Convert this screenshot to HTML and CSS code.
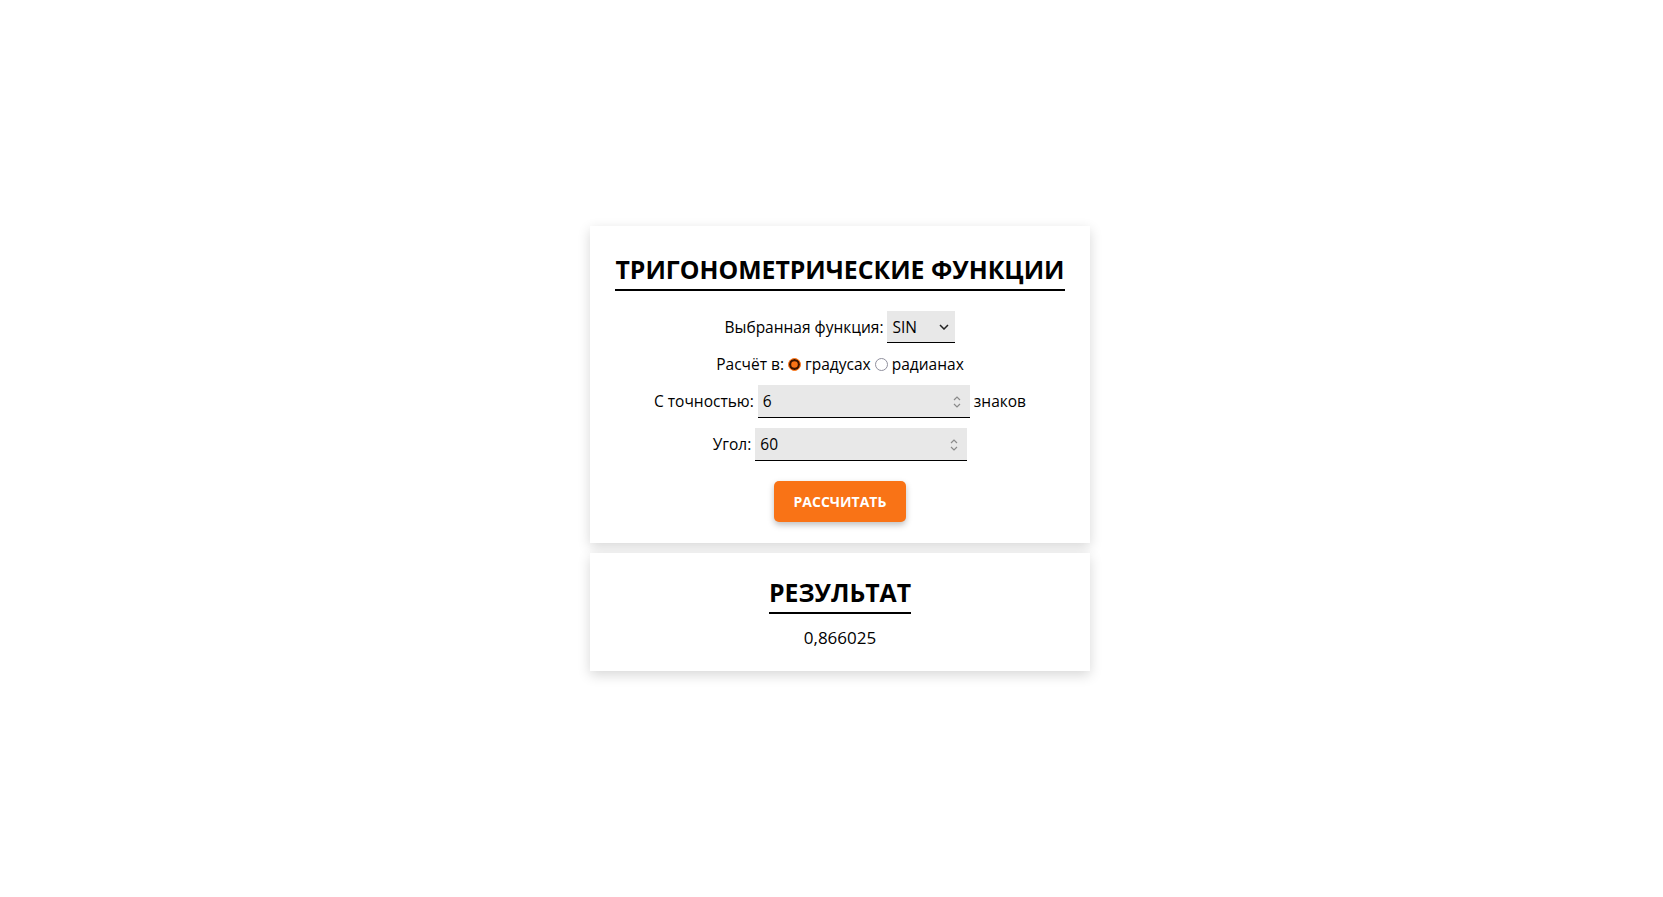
FILE: index.html
```html
<!DOCTYPE html>
<html lang="ru">
<head>
<meta charset="utf-8">
<title>Тригонометрические функции</title>
<link rel="stylesheet" href="styles.css">
</head>
<body>
<main class="page">
  <section class="card card-form">
    <h1 class="title">Тригонометрические функции</h1>
    <div class="row">
      <label for="fn">Выбранная функция:</label>
      <span class="field"><select id="fn" class="select">
        <option>SIN</option>
        <option>COS</option>
        <option>TG</option>
        <option>CTG</option>
      </select><svg class="chev" width="10" height="6" viewBox="0 0 10 6"><path d="M1 1 L5 5 L9 1" fill="none" stroke="#222" stroke-width="1.5"/></svg></span>
    </div>
    <div class="row row-radio">
      <span>Расчёт в:</span> <input type="radio" class="radio" name="unit" id="deg" checked> <label for="deg">градусах</label> <input type="radio" class="radio" name="unit" id="rad"> <label for="rad">радианах</label>
    </div>
    <div class="row">
      <label for="prec">С точностью:</label>
      <span class="field"><input id="prec" class="num" type="number" value="6"><svg class="spin" width="8" height="14" viewBox="0 0 8 14"><path d="M1 5 L4 2 L7 5 M1 9 L4 12 L7 9" fill="none" stroke="#8a8a8a" stroke-width="1.2"/></svg></span>
      <span>знаков</span>
    </div>
    <div class="row">
      <label for="angle">Угол:</label>
      <span class="field"><input id="angle" class="num" type="number" value="60"><svg class="spin" width="8" height="14" viewBox="0 0 8 14"><path d="M1 5 L4 2 L7 5 M1 9 L4 12 L7 9" fill="none" stroke="#8a8a8a" stroke-width="1.2"/></svg></span>
    </div>
    <div class="row row-btn">
      <button class="btn" type="button">Рассчитать</button>
    </div>
  </section>
  <section class="card card-result">
    <h2 class="title">Результат</h2>
    <p class="result">0,866025</p>
  </section>
</main>
</body>
</html>
```

FILE: styles.css
```css
* { box-sizing: border-box; }

html, body {
  margin: 0;
  padding: 0;
  background: #ffffff;
}

body {
  font-family: "Open Sans", "Noto Sans", sans-serif;
  font-size: 16px;
  color: #000;
}

.page {
  min-height: 100vh;
  display: flex;
  flex-direction: column;
  align-items: center;
  justify-content: center;
  gap: 10px;
  padding-left: 17px;
}

.card {
  width: 500px;
  background: #fff;
  box-shadow: 0 4px 12px rgba(0, 0, 0, 0.16);
  text-align: center;
}

.card-form {
  padding: 28px 20px 21px;
}

.card-result {
  padding: 24px 20px 22px;
}

.title {
  display: inline-block;
  margin: 0;
  font-size: 24.8px;
  line-height: 30.6px;
  font-weight: 700;
  white-space: nowrap;
  text-transform: uppercase;
  padding-bottom: 4px;
  border-bottom: 2px solid #000;
}

.card-form .title {
  margin-bottom: 20px;
}

.row {
  line-height: 22px;
  margin-bottom: 10px;
  font-size: 15.5px;
}

.radio {
  -webkit-appearance: none;
  appearance: none;
  width: 13px;
  height: 13px;
  margin: 0;
  border-radius: 50%;
  border: 1.6px solid #8f8f9d;
  background: #fff;
  vertical-align: -1px;
}

.radio:checked {
  border: 1px solid #f97316;
  background: #f97316;
  box-shadow: inset 0 0 0 2.2px #3b1500;
}

.field {
  position: relative;
  display: inline-block;
}

.select {
  -webkit-appearance: none;
  appearance: none;
  font-family: inherit;
  font-size: 15.5px;
  width: 68px;
  height: 32px;
  padding: 0 20px 0 5px;
  background: #e8e8e8;
  border: none;
  border-bottom: 1.5px solid #000;
  border-radius: 0;
  color: #000;
}

.chev {
  position: absolute;
  right: 6px;
  top: 13px;
  pointer-events: none;
}

.num {
  font-family: inherit;
  font-size: 15.5px;
  width: 212px;
  height: 33px;
  padding: 0 8px 0 5px;
  background: #e8e8e8;
  border: none;
  border-bottom: 1.5px solid #000;
  border-radius: 0;
  color: #000;
  -moz-appearance: textfield;
}

.num::-webkit-inner-spin-button,
.num::-webkit-outer-spin-button {
  -webkit-appearance: none;
  margin: 0;
}

.spin {
  position: absolute;
  right: 9px;
  top: 10px;
  pointer-events: none;
}

.row-btn {
  margin: 20px 0 0;
}

.btn {
  font-family: inherit;
  font-size: 14px;
  font-weight: 700;
  text-transform: uppercase;
  color: #fff;
  background: #f97316;
  border: none;
  border-radius: 5px;
  width: 132px;
  height: 41px;
  box-shadow: 0 3px 6px rgba(0, 0, 0, 0.25);
  cursor: pointer;
}

.result {
  margin: 13px 0 0;
  font-size: 17px;
  line-height: 22px;
}
```
